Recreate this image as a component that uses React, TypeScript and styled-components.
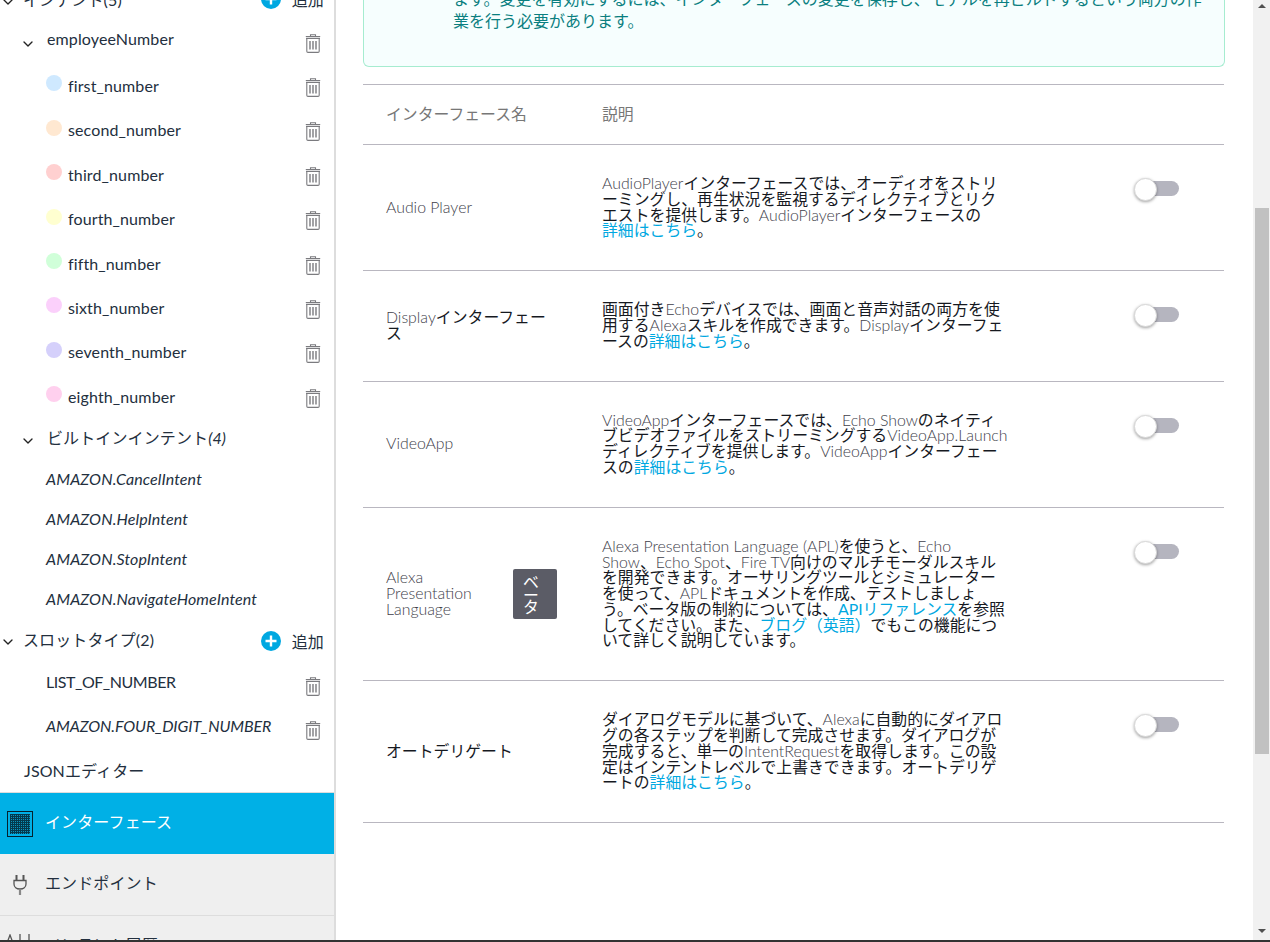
import * as React from 'react'
import styled, { createGlobalStyle } from 'styled-components'
import { ChevronDown } from 'lucide-react'

const FONT = `Lato, 'Noto Sans CJK JP', sans-serif`

const GlobalStyle = createGlobalStyle`
	html, body {
		margin: 0;
		height: 100%;
		overflow: hidden;
		background: #fff;
		font-family: ${FONT};
	}
`

const Page = styled.div`
	display: flex;
	flex-direction: column;
	height: 942px;
`
const Body = styled.div`
	display: flex;
	height: 940px;
	overflow: hidden;
`
const BottomEdge = styled.div`
	height: 2px;
	background: #333;
`
const Sidebar = styled.aside`
	width: 334px;
	flex: none;
	border-right: 2px solid #ddd;
	overflow: hidden;
	font-size: 16px;
	letter-spacing: 0.12px;
	color: #232f3e;
`
const Tree = styled.div`
	margin-top: -21px;
`
const SlotTypeList = styled.div`
	padding-top: 2px;
`
const Row = styled.div<{ $height: number; $indent: number }>`
	display: flex;
	align-items: center;
	height: ${(p) => p.$height}px;
	padding-left: ${(p) => p.$indent}px;
	padding-right: 13px;
`
const RowText = styled.span<{ $italic?: boolean; $lift?: number; $tracking?: number }>`
	flex: 1;
	white-space: nowrap;
	font-style: ${(p) => (p.$italic ? 'italic' : 'normal')};
	letter-spacing: ${(p) => p.$tracking ?? 0.12}px;
	transform: translateY(${(p) => -(p.$lift ?? 0)}px);
`
const Chevron = styled(ChevronDown)<{ $gap: number }>`
	flex: none;
	width: 16px;
	height: 16px;
	margin-right: ${(p) => p.$gap}px;
	margin-top: 5px;
	color: #222;
`
const Dot = styled.span<{ $color: string }>`
	flex: none;
	width: 16px;
	height: 16px;
	border-radius: 50%;
	margin-right: 6px;
	margin-top: -4px;
	background: ${(p) => p.$color};
`
const AddGroup = styled.span<{ $drop: number }>`
	flex: none;
	display: flex;
	align-items: center;
	gap: 11px;
	margin-right: -3px;
	white-space: nowrap;
	transform: translateY(${(p) => p.$drop}px);
`
const TrashWrap = styled.span`
	flex: none;
	display: flex;
	transform: translateY(2px);
`
const NavItem = styled.div<{ $active?: boolean }>`
	display: flex;
	align-items: center;
	gap: 12px;
	height: 61px;
	padding-left: 7px;
	font-size: 16px;
	background: ${(p) => (p.$active ? '#00b0e6' : '#efefef')};
	color: ${(p) => (p.$active ? '#fff' : '#232f3e')};
	border-bottom: ${(p) => (p.$active ? '0' : '1px solid #ddd')};
`
const NavLabel = styled.span`
	transform: translateY(-3px);
`
const NavDivider = styled.div`
	height: 1px;
	background: #ddd;
`
const IconSlot = styled.span`
	flex: none;
	width: 26px;
	height: 26px;
	display: flex;
	align-items: center;
	justify-content: center;
`
const Main = styled.main`
	flex: 1;
	min-width: 0;
	padding: 0 28px 0 27px;
	overflow: hidden;
`
const Alert = styled.div`
	margin-top: -30px;
	height: 97px;
	box-sizing: border-box;
	padding: 18px 10px 0 89px;
	border: 1px solid #a6ecd0;
	border-radius: 0 0 6px 6px;
	border-top: 0;
	background: #f6fefe;
	color: #0a7f80;
	font-size: 16px;
	line-height: 21.5px;
	white-space: nowrap;
`
const Table = styled.div`
	margin-top: 17px;
	margin-right: 1px;
	border-top: 1px solid #b9b7c0;
`
const HeaderRow = styled.div`
	display: flex;
	align-items: center;
	box-sizing: border-box;
	height: 60px;
	padding-left: 23px;
	padding-bottom: 2px;
	border-bottom: 1px solid #b9b7c0;
	color: #777;
	font-size: 15.85px;
`
const NameHeader = styled.div`
	width: 216px;
`
const BodyRow = styled.div`
	display: flex;
	padding: 30.1px 0 32.1px 23px;
	border-bottom: 1px solid #b9b7c0;
	font-size: 15.85px;
	line-height: 15.75px;
	color: #16191f;
`
const NameCell = styled.div`
	width: 216px;
	flex: none;
	display: flex;
	align-items: center;
	white-space: nowrap;
`
const NameText = styled.div`
	width: 127px;
	flex: none;
`
const Beta = styled.div`
	width: 44px;
	height: 50px;
	flex: none;
	box-sizing: border-box;
	margin-top: 2px;
	padding: 7px 10px 0;
	background: #5b5c66;
	border-radius: 2px;
	color: #fff;
	white-space: normal;
	line-height: 12.5px;
`
const DescCell = styled.div`
	width: 538px;
	flex: none;
	white-space: nowrap;
`
const Latin = styled.span`
	color: #3e3e4a;
	font-weight: 300;
`
const DocLink = styled.span`
	color: #00a8e1;
`
const Toggle = styled.div`
	position: relative;
	width: 39px;
	height: 15px;
	margin-top: 6px;
	flex: none;
	border-radius: 8px;
	background: #b5b5bf;
`
const Knob = styled.span`
	position: absolute;
	left: -6px;
	top: -3px;
	width: 21px;
	height: 21px;
	border-radius: 50%;
	background: #fff;
	border: 1px solid #d8d8d8;
	box-shadow: 0 1px 3px rgba(0, 0, 0, 0.35);
`
const ScrollTrack = styled.div`
	width: 17px;
	flex: none;
	height: 940px;
	background: #f1f1f1;
	display: flex;
	flex-direction: column;
	align-items: center;
`
const ArrowUp = styled.span`
	margin-top: 4px;
	width: 0;
	height: 0;
	border-left: 4px solid transparent;
	border-right: 4px solid transparent;
	border-bottom: 4px solid #505050;
`
const ArrowDown = styled.span`
	margin-top: 175px;
	width: 0;
	height: 0;
	border-left: 4px solid transparent;
	border-right: 4px solid transparent;
	border-top: 4px solid #505050;
`
const ScrollThumb = styled.div`
	width: 14px;
	height: 546px;
	margin-top: 200px;
	background: #c1c1c1;
`

const Trash = () => (
	<svg width="16" height="19" viewBox="0 0 16 19" fill="none" stroke="#7b7b7f" strokeWidth="1.1">
		<path d="M5.5 2V.8h5V2" />
		<path d="M.8 2.500h14.400M1 4.400h14" />
		<path d="M1.800 4.400v12.800c0 .7.500 1.200 1.200 1.200h10c.7 0 1.200-.5 1.200-1.200V4.400" />
		<path d="M5 7v8.600M8 7v8.600M11 7v8.600" strokeWidth="1.4" />
	</svg>
)

const PlusCircle = () => (
	<svg width="20" height="20" viewBox="0 0 20 20">
		<circle cx="10" cy="10" r="10" fill="#00a8e1" />
		<path d="M10 4.500v11M4.500 10h11" stroke="#fff" strokeWidth="2.4" />
	</svg>
)

const GridIcon = () => (
	<svg width="26" height="26" viewBox="0 0 26 26">
		<rect x="0.5" y="0.5" width="25" height="25" fill="none" stroke="#04222e" />
		<rect x="3" y="3" width="20" height="20" fill="#0b93bd" />
		<path
			d="M3.500 3v20M5.500 3v20M7.500 3v20M9.500 3v20M11.500 3v20M13.500 3v20M15.500 3v20M17.500 3v20M19.500 3v20M21.500 3v20M3 3.500h20M3 5.500h20M3 7.500h20M3 9.500h20M3 11.500h20M3 13.500h20M3 15.500h20M3 17.500h20M3 19.500h20M3 21.500h20"
			stroke="#032330"
			strokeWidth="1"
			opacity="0.8"
		/>
	</svg>
)

const PlugIcon = () => (
	<svg width="14" height="22" viewBox="0 0 14 22" fill="none" stroke="#555" strokeWidth="1.3">
		<path d="M3.500 1v5M10.500 1v5" strokeWidth="2" />
		<path d="M1 6.500h12v3.500c0 3-2.500 5-6 5s-6-2-6-5z" />
		<path d="M7 15v6" strokeWidth="2.2" stroke="#888" />
	</svg>
)

const HistoryIcon = () => (
	<svg width="26" height="26" viewBox="0 0 26 26" fill="none" stroke="#555" strokeWidth="1.3">
		<path d="M0 9L3 1l3 8" />
		<path d="M13 0v20M22 0v20" />
	</svg>
)

const SLOTS = [
	['first_number', '#cfe9ff'],
	['second_number', '#ffe8d1'],
	['third_number', '#ffd0d0'],
	['fourth_number', '#ffffd0'],
	['fifth_number', '#d0ffd9'],
	['sixth_number', '#fbd0fb'],
	['seventh_number', '#d5d0fb'],
	['eighth_number', '#ffd0ee'],
]

const BUILT_IN = [
	'AMAZON.CancelIntent',
	'AMAZON.HelpIntent',
	'AMAZON.StopIntent',
	'AMAZON.NavigateHomeIntent',
]

const DETAIL = <DocLink>詳細はこちら</DocLink>

const ROWS: { name: React.ReactNode; beta?: boolean; desc: React.ReactNode }[] = [
	{
		name: <Latin>Audio Player</Latin>,
		desc: (
			<>
				<Latin>AudioPlayer</Latin>インターフェースでは、オーディオをストリ<br />
				ーミングし、再生状況を監視するディレクティブとリク<br />
				エストを提供します。<Latin>AudioPlayer</Latin>インターフェースの<br />
				{DETAIL}。
			</>
		),
	},
	{
		name: (
			<>
				<Latin>Display</Latin>インターフェー<br />ス
			</>
		),
		desc: (
			<>
				画面付き<Latin>Echo</Latin>デバイスでは、画面と音声対話の両方を使<br />
				用する<Latin>Alexa</Latin>スキルを作成できます。<Latin>Display</Latin>インターフェ<br />
				ースの{DETAIL}。
			</>
		),
	},
	{
		name: <Latin>VideoApp</Latin>,
		desc: (
			<>
				<Latin>VideoApp</Latin>インターフェースでは、<Latin>Echo Show</Latin>のネイティ<br />
				ブビデオファイルをストリーミングする<Latin>VideoApp.Launch</Latin><br />
				ディレクティブを提供します。<Latin>VideoApp</Latin>インターフェー<br />
				スの{DETAIL}。
			</>
		),
	},
	{
		name: (
			<Latin>
				Alexa<br />Presentation<br />Language
			</Latin>
		),
		beta: true,
		desc: (
			<>
				<Latin>Alexa Presentation Language (APL)</Latin>を使うと、<Latin>Echo</Latin><br />
				<Latin>Show</Latin>、<Latin>Echo Spot</Latin>、<Latin>Fire TV</Latin>向けのマルチモーダルスキル<br />
				を開発できます。オーサリングツールとシミュレーター<br />
				を使って、<Latin>APL</Latin>ドキュメントを作成、テストしましょ<br />
				う。ベータ版の制約については、<DocLink>APIリファレンス</DocLink>を参照<br />
				してください。また、<DocLink>ブログ（英語）</DocLink>でもこの機能につ<br />
				いて詳しく説明しています。
			</>
		),
	},
	{
		name: 'オートデリゲート',
		desc: (
			<>
				ダイアログモデルに基づいて、<Latin>Alexa</Latin>に自動的にダイアロ<br />
				グの各ステップを判断して完成させます。ダイアログが<br />
				完成すると、単一の<Latin>IntentRequest</Latin>を取得します。この設<br />
				定はインテントレベルで上書きできます。オートデリゲ<br />
				ートの{DETAIL}。
			</>
		),
	},
]

export default function App() {
	return (
		<Page>
			<GlobalStyle />
			<Body>
				<Sidebar>
					<Tree>
						<Row $height={40} $indent={0}>
							<Chevron $gap={7} />
							<RowText>インテント(5)</RowText>
							<AddGroup $drop={0}>
								<PlusCircle />
								追加
							</AddGroup>
						</Row>
						<Row $height={44.3} $indent={20}>
							<Chevron $gap={11} />
							<RowText $lift={3}>employeeNumber</RowText>
							<TrashWrap>
								<Trash />
							</TrashWrap>
						</Row>
						{SLOTS.map(([name, color]) => (
							<Row key={name} $height={44.4} $indent={46}>
								<Dot $color={color} />
								<RowText>{name}</RowText>
								<TrashWrap>
									<Trash />
								</TrashWrap>
							</Row>
						))}
						<Row $height={39.7} $indent={20}>
							<Chevron $gap={11} />
							<RowText $lift={1}>
								ビルトインインテント<i>(4)</i>
							</RowText>
						</Row>
						{BUILT_IN.map((name) => (
							<Row key={name} $height={40} $indent={46}>
								<RowText $italic>{name}</RowText>
							</Row>
						))}
						<Row $height={42} $indent={0}>
							<Chevron $gap={7} />
							<RowText>スロットタイプ(2)</RowText>
							<AddGroup $drop={2}>
								<PlusCircle />
								追加
							</AddGroup>
						</Row>
						<SlotTypeList>
							<Row $height={44} $indent={46}>
								<RowText $lift={3} $tracking={-0.45}>
									LIST_OF_NUMBER
								</RowText>
								<TrashWrap>
									<Trash />
								</TrashWrap>
							</Row>
							<Row $height={44} $indent={46}>
								<RowText $italic $lift={3} $tracking={-0.1}>
									AMAZON.FOUR_DIGIT_NUMBER
								</RowText>
								<TrashWrap>
									<Trash />
								</TrashWrap>
							</Row>
						</SlotTypeList>
						<Row $height={42} $indent={24}>
							<RowText $lift={1}>JSONエディター</RowText>
						</Row>
					</Tree>
					<NavDivider />
					<NavItem $active>
						<IconSlot>
							<GridIcon />
						</IconSlot>
						<NavLabel>インターフェース</NavLabel>
					</NavItem>
					<NavItem>
						<IconSlot>
							<PlugIcon />
						</IconSlot>
						<NavLabel>エンドポイント</NavLabel>
					</NavItem>
					<NavItem>
						<IconSlot>
							<HistoryIcon />
						</IconSlot>
						<NavLabel>インテント履歴</NavLabel>
					</NavItem>
				</Sidebar>
				<Main>
					<Alert>
						ます。変更を有効にするには、インターフェースの変更を保存し、モデルを再ビルドするという両方の作
						<br />
						業を行う必要があります。
					</Alert>
					<Table>
						<HeaderRow>
							<NameHeader>インターフェース名</NameHeader>
							説明
						</HeaderRow>
						{ROWS.map((row, i) => (
							<BodyRow key={i}>
								<NameCell>
									<NameText>{row.name}</NameText>
									{row.beta && <Beta>ベータ</Beta>}
								</NameCell>
								<DescCell>{row.desc}</DescCell>
								<Toggle>
									<Knob />
								</Toggle>
							</BodyRow>
						))}
					</Table>
				</Main>
				<ScrollTrack>
					<ArrowUp />
					<ScrollThumb />
					<ArrowDown />
				</ScrollTrack>
			</Body>
			<BottomEdge />
		</Page>
	)
}
